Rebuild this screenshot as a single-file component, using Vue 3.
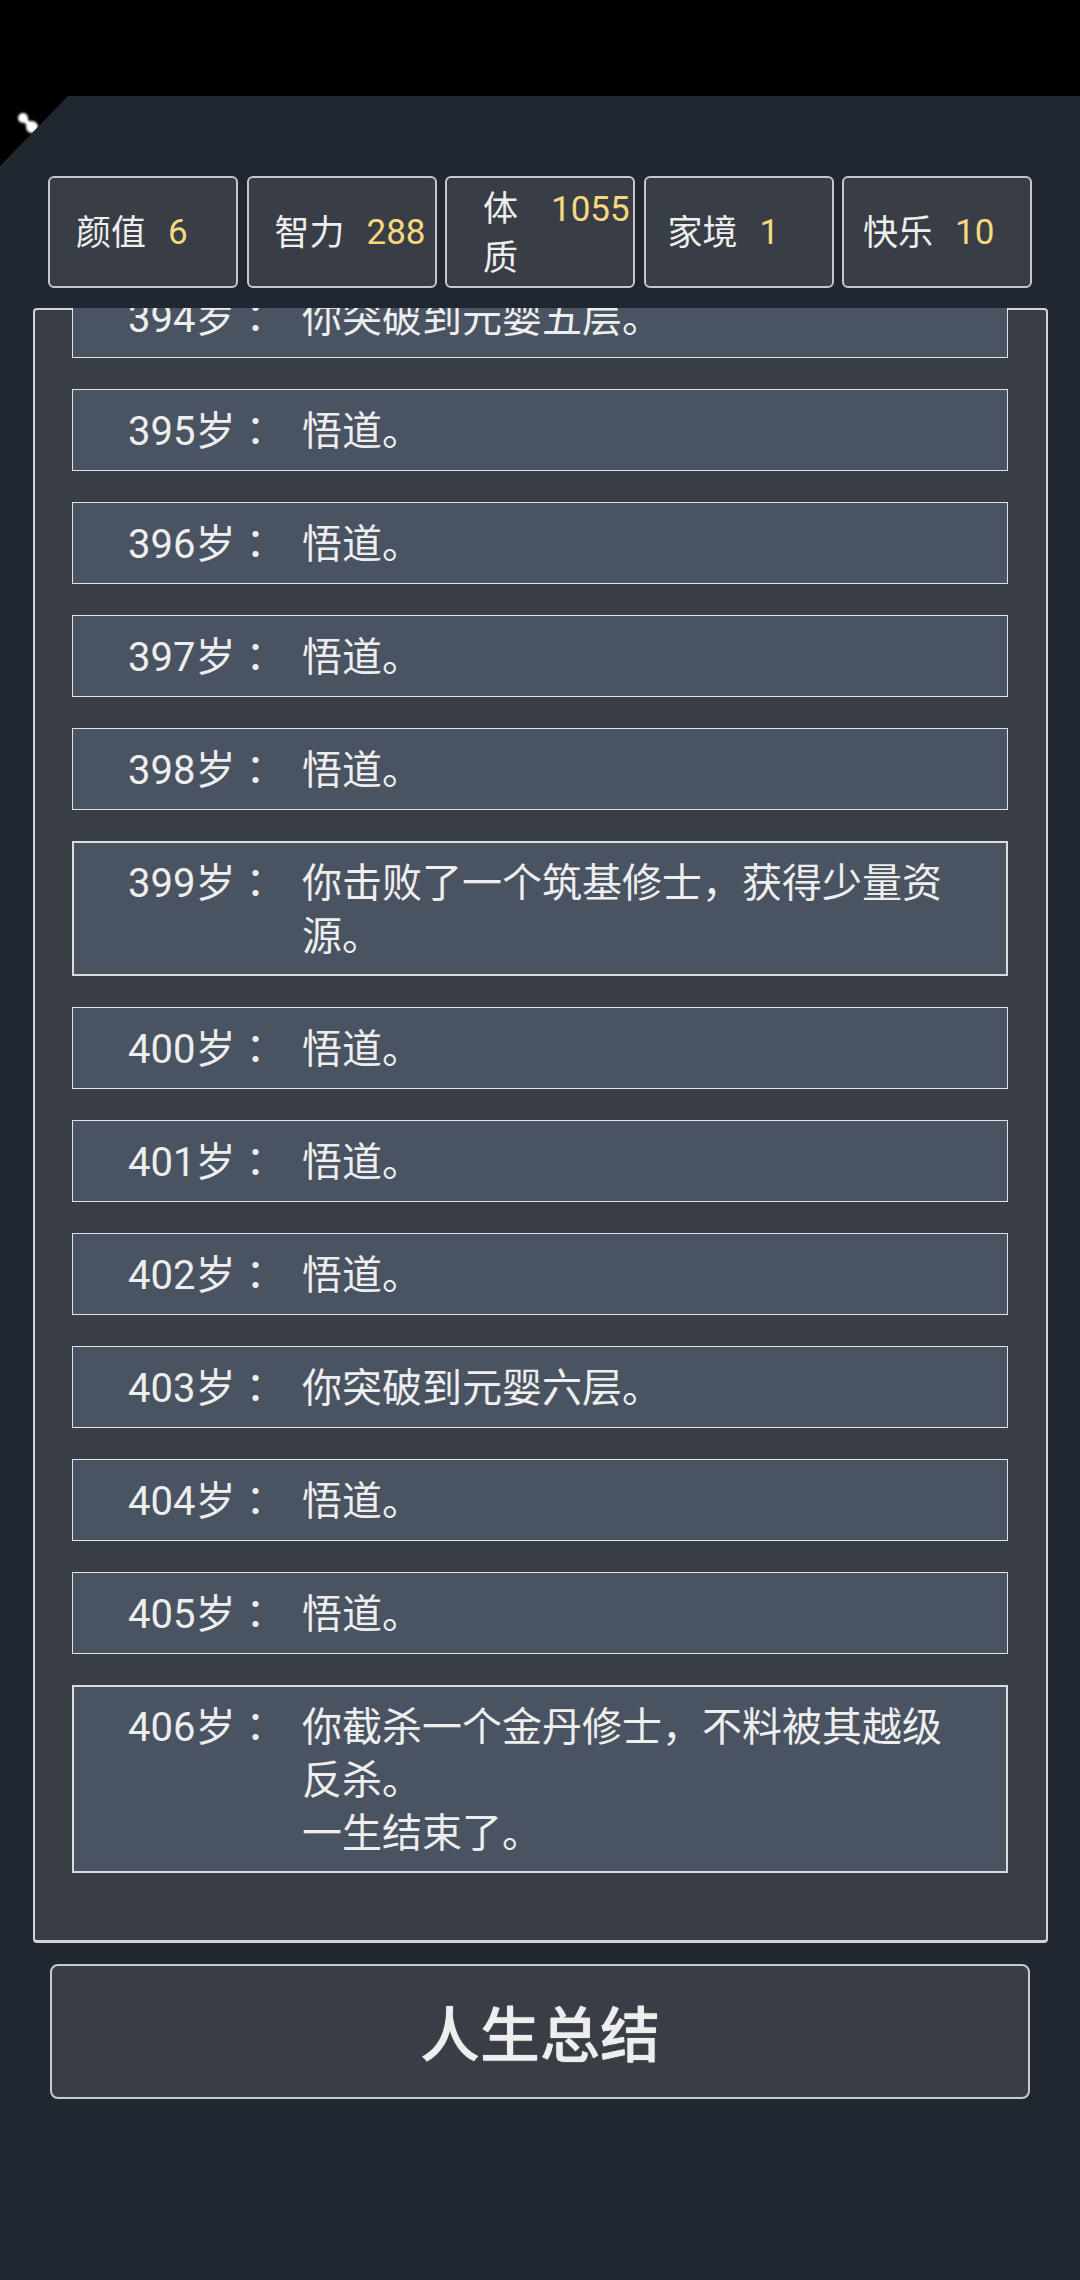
<template>
  <div class="page">
    <div class="status-bar"></div>
    <div class="corner">
      <svg class="corner__icon" width="28" height="28" viewBox="0 0 28 28">
        <path d="M8 7 L17 16" stroke="#fff" stroke-width="5" />
        <circle cx="8" cy="7" r="5" fill="#fff" />
        <circle cx="17" cy="16" r="6" fill="#fff" />
      </svg>
    </div>

    <ul class="stats">
      <li v-for="stat in stats" :key="stat.label" class="stat" :class="{ 'stat--wrap': stat.label === '体质' }">
        <span class="stat__label">{{ stat.label }}</span>
        <span class="stat__value">{{ stat.value }}</span>
      </li>
    </ul>

    <div class="panel">
      <div class="panel__scroll">
        <ul class="log">
          <li v-for="row in rows" :key="row.age" class="log__row" :class="{ 'log__row--long': row.text.length > 15 }">
            <span class="log__age">{{ row.age }}岁<span class="log__colon">：</span></span>
            <span class="log__text">
              {{ row.text }}
              <br v-if="row.extra" />
              {{ row.extra }}
            </span>
          </li>
        </ul>
      </div>
    </div>

    <button class="summary">人生总结</button>
  </div>
</template>

<script setup>
const stats = [
  { label: '颜值', value: 6 },
  { label: '智力', value: 288 },
  { label: '体质', value: 1055 },
  { label: '家境', value: 1 },
  { label: '快乐', value: 10 },
];

const rows = [
  { age: 394, text: '你突破到元婴五层。' },
  { age: 395, text: '悟道。' },
  { age: 396, text: '悟道。' },
  { age: 397, text: '悟道。' },
  { age: 398, text: '悟道。' },
  { age: 399, text: '你击败了一个筑基修士，获得少量资源。' },
  { age: 400, text: '悟道。' },
  { age: 401, text: '悟道。' },
  { age: 402, text: '悟道。' },
  { age: 403, text: '你突破到元婴六层。' },
  { age: 404, text: '悟道。' },
  { age: 405, text: '悟道。' },
  { age: 406, text: '你截杀一个金丹修士，不料被其越级反杀。', extra: '一生结束了。' },
];
</script>

<style>
html,
body {
  margin: 0;
  background: #202731;
}
</style>

<style scoped>
.page {
  position: relative;
  height: 2280px;
  overflow: hidden;
  background: #202731;
  color: #eeeeee;
  font-family: Roboto, "Noto Sans CJK SC", sans-serif;
}

.status-bar {
  height: 96px;
  background: #000;
}

.corner {
  position: absolute;
  left: 0;
  top: 96px;
  width: 68px;
  height: 70px;
  background: #000;
  clip-path: polygon(0 0, 100% 0, 0 100%);
}

.corner__icon {
  position: absolute;
  left: 15px;
  top: 15px;
  filter: blur(1px);
}

.stats {
  display: flex;
  justify-content: space-between;
  margin: 80px 48px 0;
  padding: 0;
  list-style: none;
}

.stat {
  display: flex;
  align-items: center;
  box-sizing: border-box;
  flex: 0 0 190px;
  height: 112px;
  padding-left: 26px;
  gap: 22px;
  background: #393e46;
  border: 2px solid #c4c6c9;
  border-radius: 6px;
  font-size: 35px;
  line-height: 49px;
}

.stat:nth-child(4) {
  padding-left: 22px;
}

.stat:nth-child(5) {
  padding-left: 19px;
}

.stat--wrap {
  padding-left: 36px;
  gap: 33px;
}

.stat--wrap .stat__label {
  width: 35px;
  margin-top: 3px;
}

.stat--wrap .stat__value {
  align-self: flex-start;
  margin-top: 7px;
}

.stat__label {
  flex: none;
  margin-top: 2px;
}

.stat__value {
  color: #f6d87f;
  white-space: nowrap;
}

.panel {
  box-sizing: border-box;
  height: 1635px;
  margin: 20px 32px 0 33px;
  background: #393e46;
  border: 2px solid #d2d3d5;
  border-bottom-width: 3px;
  border-radius: 4px;
}

.panel__scroll {
  height: 1632px;
  margin-top: -2px;
  overflow: hidden;
}

.log {
  display: flex;
  flex-direction: column;
  gap: 31px;
  margin: -32px 38px 0 37px;
  padding: 0;
  list-style: none;
}

.log__row {
  display: flex;
  gap: 27px;
  padding: 15px 0 12px 55px;
  background: #4a5362;
  border: 1px solid #e2e3e6;
  font-size: 40px;
  line-height: 53px;
}

.log__row--long {
  padding: 14px 0 11px 54px;
  border-width: 2px;
  border-color: #d9dbde;
}

.log__age {
  flex: none;
  width: 147px;
  white-space: nowrap;
}

.log__colon {
  font-family: "Noto Sans CJK JP", sans-serif;
  line-height: 0;
  vertical-align: -1px;
}

.log__text {
  flex: 1;
  padding-right: 40px;
}

.summary {
  display: block;
  box-sizing: border-box;
  width: 980px;
  height: 135px;
  margin: 21px 0 0 50px;
  padding: 0 0 2px;
  background: #393e46;
  color: #eeeeee;
  border: 2px solid #c9cacd;
  border-radius: 8px;
  font-family: inherit;
  font-size: 60px;
  font-weight: 500;
  text-shadow: 0 0 1px #eeeeee;
}
</style>
